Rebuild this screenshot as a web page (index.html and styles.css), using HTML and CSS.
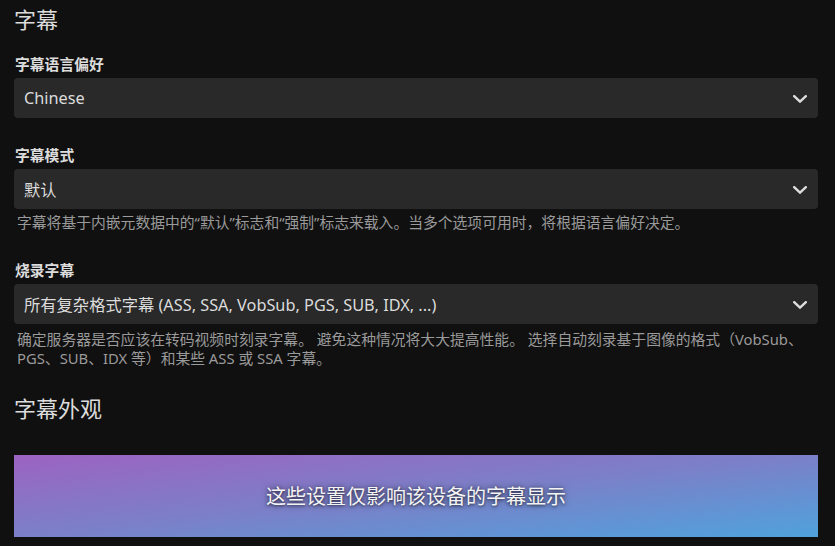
FILE: index.html
```html
<!DOCTYPE html>
<html lang="zh-CN">
<head>
<meta charset="utf-8">
<link rel="stylesheet" href="styles.css">
</head>
<body>
<div class="page">
  <h2 class="section-title">字幕</h2>

  <div class="field field-first">
    <label class="field-label">字幕语言偏好</label>
    <div class="select">
      <span class="select-value">Chinese</span>
      <svg class="chevron" width="14" height="8" viewBox="0 0 14 8"><polyline points="1.2,1.2 7,6.6 12.8,1.2" fill="none" stroke="#dcdcdc" stroke-width="2.4" stroke-linecap="square"/></svg>
    </div>
  </div>

  <div class="field">
    <label class="field-label">字幕模式</label>
    <div class="select">
      <span class="select-value">默认</span>
      <svg class="chevron" width="14" height="8" viewBox="0 0 14 8"><polyline points="1.2,1.2 7,6.6 12.8,1.2" fill="none" stroke="#dcdcdc" stroke-width="2.4" stroke-linecap="square"/></svg>
    </div>
    <div class="field-desc">字幕将基于内嵌元数据中的“默认”标志和“强制”标志来载入。当多个选项可用时，将根据语言偏好决定。</div>
  </div>

  <div class="field field-third">
    <label class="field-label">烧录字幕</label>
    <div class="select">
      <span class="select-value">所有复杂格式字幕 (ASS, SSA, VobSub, PGS, SUB, IDX, ...)</span>
      <svg class="chevron" width="14" height="8" viewBox="0 0 14 8"><polyline points="1.2,1.2 7,6.6 12.8,1.2" fill="none" stroke="#dcdcdc" stroke-width="2.4" stroke-linecap="square"/></svg>
    </div>
    <div class="field-desc field-desc-2">确定服务器是否应该在转码视频时刻录字幕。 避免这种情况将大大提高性能。 选择自动刻录基于图像的格式（VobSub、PGS、SUB、IDX 等）和某些 ASS 或 SSA 字幕。</div>
  </div>

  <h2 class="section-title section-title-2">字幕外观</h2>

  <div class="preview">
    <span class="preview-text">这些设置仅影响该设备的字幕显示</span>
  </div>
</div>
</body>
</html>
```

FILE: styles.css
```css
html, body {
  margin: 0;
  padding: 0;
  background: #101010;
}
body {
  font-family: "Noto Sans", "Noto Sans CJK SC", sans-serif;
  color: #dcdcdc;
}
.page {
  padding: 4px 17px 0 14px;
  display: flex;
  flex-direction: column;
}
.section-title {
  margin: 0;
  font-size: 22px;
  font-weight: 400;
  line-height: 30px;
  color: #dcdcdc;
}
.field {
  display: flex;
  flex-direction: column;
  margin-top: 27px;
}
.field-first {
  margin-top: 20px;
}
.field-third {
  margin-top: 28px;
}
.field-label {
  font-size: 14.8px;
  font-weight: 700;
  line-height: 20px;
  margin: 0 0 4px 1px;
  color: #dcdcdc;
}
.select {
  height: 40px;
  background: #292929;
  border-radius: 4px;
  display: flex;
  align-items: center;
  justify-content: space-between;
  padding: 0 11px 0 10px;
}
.select-value {
  font-size: 16.3px;
  color: #dcdcdc;
}
.chevron {
  display: block;
  margin-top: 2px;
}
.field-desc {
  margin: 4px 0 0 3px;
  font-size: 14.8px;
  line-height: 19px;
  color: #9a9a9a;
}
.field-desc-2 {
  margin-top: 6px;
}
.section-title-2 {
  margin-top: 25px;
}
.preview {
  margin-top: 32px;
  height: 82px;
  background: linear-gradient(to bottom right, #9c63c1, #7b80c8 50%, #4fa2dc);
  display: flex;
  align-items: center;
  justify-content: center;
}
.preview-text {
  font-size: 20px;
  color: #f4f4f4;
  text-shadow: 0 0 6px rgba(0, 0, 0, 0.6), 0 1px 3px rgba(0, 0, 0, 0.5);
  margin-top: -2px;
}
```
